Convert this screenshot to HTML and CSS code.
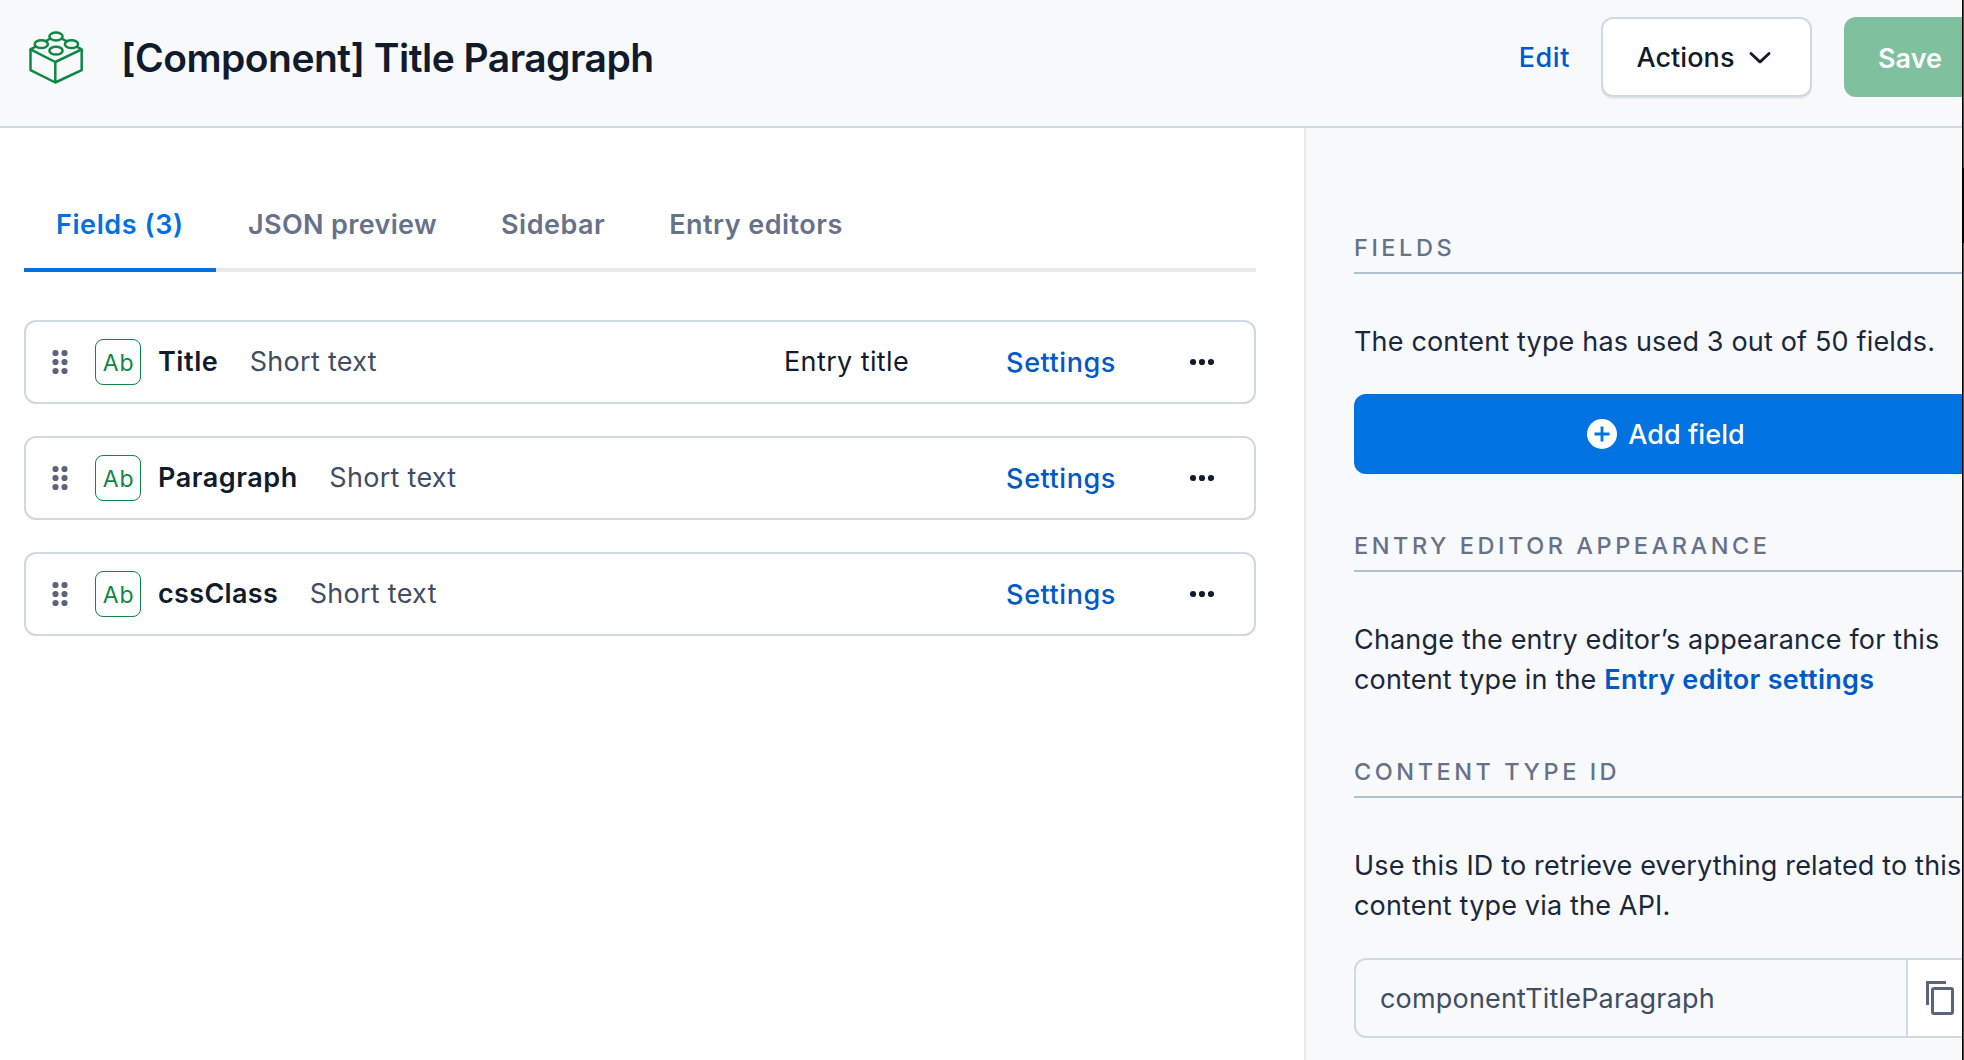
FILE: index.html
```html
<!DOCTYPE html>
<html lang="en">
<head>
<meta charset="utf-8">
<title>Content type</title>
<link rel="stylesheet" href="styles.css">
</head>
<body>
<svg class="defs" width="0" height="0" aria-hidden="true">
  <symbol id="drag" viewBox="0 0 16 26">
    <circle cx="3.5" cy="4" r="3.1"/><circle cx="12.5" cy="4" r="3.1"/>
    <circle cx="3.5" cy="13" r="3.1"/><circle cx="12.5" cy="13" r="3.1"/>
    <circle cx="3.5" cy="22" r="3.1"/><circle cx="12.5" cy="22" r="3.1"/>
  </symbol>
  <symbol id="more" viewBox="0 0 24 8">
    <circle cx="3" cy="4" r="3.1"/><circle cx="12" cy="4" r="3.1"/><circle cx="21" cy="4" r="3.1"/>
  </symbol>
</svg>
<div class="page">
  <header class="header">
    <svg class="brick" viewBox="24 25 64 64" width="64" height="64">
      <path d="M30.5 49.3 56 35.5 81.7 49.3 55.3 62Z"/>
      <path fill="none" d="M30.5 49.3V70.2L55.3 82.5 81.7 70.2V49.3M55.3 62V82.5"/>
      <ellipse cx="56" cy="36.5" rx="6.6" ry="3.9"/>
      <ellipse cx="41.3" cy="44.2" rx="6.6" ry="3.9"/>
      <ellipse cx="71.5" cy="44.2" rx="6.6" ry="3.9"/>
      <ellipse cx="56" cy="50.7" rx="6.6" ry="3.9"/>
    </svg>
    <h1 class="title">[Component] Title Paragraph</h1>
    <a class="edit">Edit</a>
    <button class="actions">Actions
      <svg class="chevron" viewBox="0 0 24 16" width="24" height="16"><path d="M3 3.5 12 12 21 3.5"/></svg>
    </button>
    <button class="save">Save</button>
  </header>
  <div class="body">
    <main class="main">
      <nav class="tabs">
        <a class="tab tab-active">Fields (3)</a>
        <a class="tab tab-json">JSON preview</a>
        <a class="tab">Sidebar</a>
        <a class="tab">Entry editors</a>
      </nav>
      <div class="fields">
        <div class="field">
          <svg class="drag" width="16" height="26"><use href="#drag"/></svg>
          <span class="type-icon">Ab</span>
          <span class="name">Title</span>
          <span class="type">Short text</span>
          <span class="entry-title">Entry title</span>
          <a class="settings">Settings</a>
          <svg class="more" width="24" height="8"><use href="#more"/></svg>
        </div>
        <div class="field">
          <svg class="drag" width="16" height="26"><use href="#drag"/></svg>
          <span class="type-icon">Ab</span>
          <span class="name">Paragraph</span>
          <span class="type">Short text</span>
          <a class="settings">Settings</a>
          <svg class="more" width="24" height="8"><use href="#more"/></svg>
        </div>
        <div class="field">
          <svg class="drag" width="16" height="26"><use href="#drag"/></svg>
          <span class="type-icon">Ab</span>
          <span class="name name-tight">cssClass</span>
          <span class="type">Short text</span>
          <a class="settings">Settings</a>
          <svg class="more" width="24" height="8"><use href="#more"/></svg>
        </div>
      </div>
    </main>
    <aside class="sidebar">
      <h2 class="section">FIELDS</h2>
      <p class="text">The content type has used 3 out of 50 fields.</p>
      <button class="add">
        <svg viewBox="0 0 30 30" width="30" height="30"><circle cx="15" cy="15" r="15" fill="#fff"/><path d="M15 7.5V22.5M7.5 15H22.5" stroke="#0072e1" stroke-width="2.8"/></svg>
        <span class="add-label">Add field</span>
      </button>
      <h2 class="section">ENTRY EDITOR APPEARANCE</h2>
      <p class="text">Change the entry editor’s appearance for this<br>content type in the <a class="link">Entry editor settings</a></p>
      <h2 class="section">CONTENT TYPE ID</h2>
      <p class="text">Use this ID to retrieve everything related to this<br>content type via the API.</p>
      <div class="copy-field">
        <span class="copy-value">componentTitleParagraph</span>
        <span class="copy-button">
          <svg viewBox="0 0 30 36" width="30" height="36"><path d="M21 2.5H2.5V25"/><rect x="7.5" y="8.5" width="20" height="25" rx="1.5"/></svg>
        </span>
      </div>
    </aside>
  </div>
</div>
<div class="window-edge"></div>
</body>
</html>
```
FILE: styles.css
```css
* { box-sizing: border-box; }

html, body { margin: 0; height: 1060px; overflow: hidden; }

body {
  position: relative;
  width: 1964px;
  background: #fff;
  color: #111b2b;
  font: 400 27px/40px Inter, "Liberation Sans", sans-serif;
  letter-spacing: 0.22px;
  white-space: nowrap;
}

.defs { display: none; }

h1, h2, p { margin: 0; }

button {
  font: inherit;
  font-weight: 550;
  letter-spacing: 0.08px;
  color: inherit;
  border: 0;
  padding: 0;
}

.page { width: 1978px; height: 1060px; display: flex; flex-direction: column; }

.header {
  display: flex;
  align-items: center;
  height: 128px;
  padding: 0 0 12px 24px;
  border-bottom: 2px solid #cfd9e0;
  background: #f7f9fb;
}

.brick { fill: #f7f9fb; stroke: #0f8745; stroke-width: 2.5; stroke-linejoin: round; }

.title {
  margin: 1px auto 0 33px;
  font-size: 39px;
  line-height: 48px;
  font-weight: 600;
  letter-spacing: -0.53px;
}

.edit { color: #0059c8; font-weight: 550; letter-spacing: 0.6px; margin-right: 31px; padding-top: 1px; }

.actions {
  display: flex;
  align-items: center;
  justify-content: center;
  gap: 13px;
  width: 211px;
  height: 80px;
  margin-right: 32px;
  padding: 2px 5px 0 0;
  border: 2px solid #cfd9e0;
  border-radius: 12px;
  background: #fff;
  box-shadow: 0 2px 0 #e3e9ee;
}

.chevron { fill: none; stroke: #111b2b; stroke-width: 3; stroke-linecap: round; stroke-linejoin: round; }

.save {
  width: 134px;
  height: 80px;
  padding: 3px 2px 0 0;
  border-radius: 12px;
  background: #7fc19e;
  color: #fff;
  font-weight: 600;
}

.body { display: flex; flex: 1; }

.main { width: 1304px; padding: 48px 48px 0 24px; }

.tabs { display: flex; height: 96px; box-shadow: inset 0 -4px #e7ebee; }

.tab {
  padding: 1px 32px 0;
  line-height: 95px;
  font-weight: 600;
  letter-spacing: 0.48px;
  color: #67728a;
}

.tab-json { letter-spacing: 0.35px; }

.tab-active { width: 192px; color: #036fe3; letter-spacing: 0.58px; box-shadow: inset 0 -4px #036fe3; }

.fields { display: grid; gap: 32px; margin-top: 48px; }

.field {
  display: flex;
  align-items: center;
  height: 84px;
  padding: 0 40px 0 26px;
  border: 2px solid #cfd9e0;
  border-radius: 12px;
}

.drag { fill: #5a657c; }

.type-icon {
  width: 46px;
  height: 46px;
  margin: 0 17px 0 27px;
  padding: 2px 0 0 1px;
  border: 1.5px solid #0f8745;
  border-radius: 8px;
  color: #0f8745;
  font-size: 23px;
  line-height: 42px;
  letter-spacing: 0.8px;
  text-align: center;
}

.name { font-weight: 600; letter-spacing: 0.55px; margin-right: 31.5px; }
.name-tight { letter-spacing: 0.33px; }
.type { color: #414d63; letter-spacing: 0.28px; margin-right: auto; }
.entry-title { letter-spacing: 0.39px; margin-right: 97px; }
.settings { color: #0059c8; font-weight: 550; letter-spacing: 0.58px; margin-right: 74px; padding-top: 1px; }
.more { fill: #111b2b; }

.sidebar {
  width: 674px;
  padding: 48px 0 0 48px;
  border-left: 2px solid #e7ebee;
  background: #f7f9fb;
  color: #1b273a;
}

.section {
  height: 46px;
  margin: 52px 0 48px;
  border-bottom: 2px solid #aec1cc;
  color: #67728a;
  font-size: 23.5px;
  font-weight: 500;
  letter-spacing: 3.55px;
}

.text { letter-spacing: 0.17px; }

.add {
  display: flex;
  align-items: center;
  justify-content: center;
  gap: 11px;
  width: 100%;
  height: 80px;
  margin-top: 32px;
  border-radius: 12px;
  background: #0072e1;
  color: #fff;
}

.add-label { padding-top: 2px; }

.link { color: #0059c8; font-weight: 600; letter-spacing: 0.31px; }

.copy-field {
  display: flex;
  height: 80px;
  margin-top: 32px;
  border: 2px solid #cfd9e0;
  border-radius: 12px;
  overflow: hidden;
}

.copy-value { width: 550px; padding: 2px 0 0 24px; line-height: 74px; letter-spacing: 0.18px; color: #414d63; }

.copy-button {
  display: flex;
  align-items: center;
  flex: 1;
  padding-left: 17px;
  border-left: 2px solid #cfd9e0;
  background: #fff;
}

.copy-button svg { flex: none; fill: none; stroke: #5a657c; stroke-width: 3; }

/* Frame of the window behind the page, along the right edge */
.window-edge {
  position: absolute;
  top: 0;
  right: 0;
  width: 2px;
  height: 1060px;
  border-left: 1px solid #000;
  background: linear-gradient(#555 168px, #0a0a0a 168px 243px, #555 243px);
}
```
